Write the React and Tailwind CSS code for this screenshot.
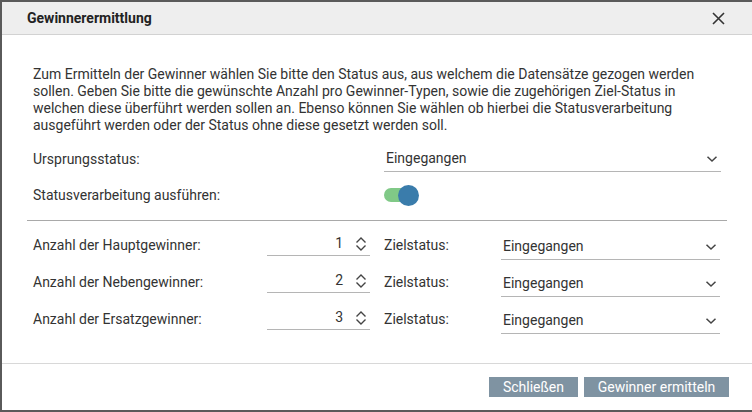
import React from 'react';

const Chevron = () => (
  <svg width="12" height="8" viewBox="0 0 12 8" fill="none" stroke="#444" strokeWidth="1.5">
    <path d="M1.5 1.8 L6 6 L10.5 1.8" />
  </svg>
);

const Spinner = () => (
  <svg width="12" height="16" viewBox="0 0 12 16" fill="none" stroke="#444" strokeWidth="1.4">
    <path d="M1.5 6.5 L6 2 L10.5 6.5" />
    <path d="M1.5 9.5 L6 14 L10.5 9.5" />
  </svg>
);

const Select = ({ value, className }) => (
  <div className={`flex items-center justify-between h-[26px] border-b border-[#b5b5b5] pl-[2px] pr-[3px] ${className}`}>
    <span>{value}</span>
    <Chevron />
  </div>
);

const rows = [
  { label: 'Anzahl der Hauptgewinner:', value: 1 },
  { label: 'Anzahl der Nebengewinner:', value: 2 },
  { label: 'Anzahl der Ersatzgewinner:', value: 3 },
];

const App = () => {
  return (
    <div className="w-[752px] h-[412px] bg-[#5a5a5a] pl-[2px] py-[2px] font-['Roboto',sans-serif] text-[14px] text-[#333]">
      <div className="flex flex-col h-full bg-white">
        <div className="flex items-center justify-between h-[33px] bg-[#eeeeee] border-b border-[#d2d2d2] pl-[25px] pr-[27px] shrink-0">
          <span className="font-bold text-[#222]">Gewinnerermittlung</span>
          <svg width="13" height="13" viewBox="0 0 13 13" stroke="#333" strokeWidth="1.6">
            <path d="M1 1 L12 12 M12 1 L1 12" />
          </svg>
        </div>

        <div className="flex-1 px-[31px] pt-[31px]">
          <p className="leading-[17px]">
            Zum Ermitteln der Gewinner wählen Sie bitte den Status aus, aus welchem die Datensätze gezogen werden
            sollen. Geben Sie bitte die gewünschte Anzahl pro Gewinner-Typen, sowie die zugehörigen Ziel-Status in
            welchen diese überführt werden sollen an. Ebenso können Sie wählen ob hierbei die Statusverarbeitung
            ausgeführt werden oder der Status ohne diese gesetzt werden soll.
          </p>

          <div className="flex items-center mt-[12px]">
            <span className="w-[351px] shrink-0">Ursprungsstatus:</span>
            <Select value="Eingegangen" className="flex-1" />
          </div>

          <div className="flex items-center h-[30px] mt-[8px]">
            <span className="w-[351px] shrink-0">Statusverarbeitung ausführen:</span>
            <div className="relative w-[36px] h-[20px]">
              <div className="absolute left-0 top-[3px] w-[28px] h-[14px] rounded-full bg-[#80c987]" />
              <div className="absolute left-[14px] top-0 w-[21px] h-[21px] rounded-full bg-[#3a7cab]" />
            </div>
          </div>

          <div className="-mx-[6px] mt-[10px] border-t border-[#a9a9a9]" />

          <div className="flex flex-col gap-[11px] mt-[11px]">
            {rows.map((r) => (
              <div key={r.label} className="flex items-center h-[26px]">
                <span className="w-[234px] shrink-0">{r.label}</span>
                <div className="flex items-center justify-end w-[103px] h-[24px] border-b border-[#b5b5b5] pr-[3px] gap-[12px] self-start">
                  <span>{r.value}</span>
                  <Spinner />
                </div>
                <span className="w-[117px] ml-[14px] shrink-0">Zielstatus:</span>
                <Select value="Eingegangen" className="w-[219px] mt-[4px]" />
              </div>
            ))}
          </div>
        </div>

        <div className="flex justify-end gap-[6px] h-[47px] border-t border-[#d8d8d8] pt-[13px] pr-[23px] shrink-0">
          <button className="h-[20px] w-[89px] bg-[#7f93a2] text-white text-[14px] leading-[20px]">Schließen</button>
          <button className="h-[20px] w-[145px] bg-[#7f93a2] text-white text-[14px] leading-[20px]">Gewinner ermitteln</button>
        </div>
      </div>
    </div>
  );
};

export default App;
